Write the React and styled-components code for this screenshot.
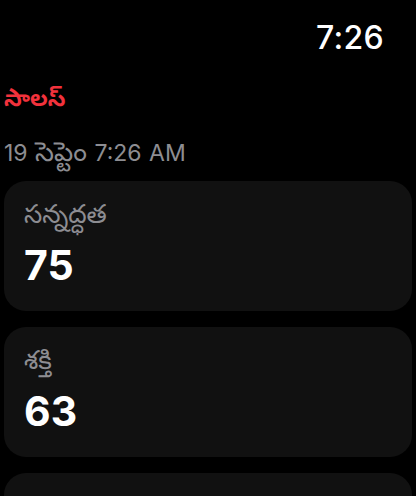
import styled, { createGlobalStyle } from 'styled-components';

const GlobalStyle = createGlobalStyle`
    html, body {
        margin: 0;
        padding: 0;
        background: #000;
    }
    body {
        font-family: "Noto Sans Telugu", "Noto Sans", Inter, "Liberation Sans", sans-serif;
        -webkit-font-smoothing: antialiased;
    }
`

const metrics = [
    { label: 'సన్నద్ధత', value: 75 },
    { label: 'శక్తి', value: 63 },
    { label: 'హృదయ స్పందన', value: 58 },
];

export default function App () {
    return (
        <Screen>
            <GlobalStyle />
            <StatusBar>
                <Clock>7:26</Clock>
            </StatusBar>
            <Title>సాలస్</Title>
            <Timestamp>
                19 <Telugu>సెప్టెం</Telugu> 7:26 AM
            </Timestamp>
            <CardList>
                { metrics.map((m) => (
                    <Card key={m.label}>
                        <Label>{m.label}</Label>
                        <Value>{m.value}</Value>
                    </Card>
                ))}
            </CardList>
        </Screen>
    )
}

const Screen = styled.div`
    width: 416px;
    height: 496px;
    overflow: hidden;
    background: #000;
    display: flex;
    flex-direction: column;
    padding: 0 4px;
    box-sizing: border-box;
`

const StatusBar = styled.div`
    display: flex;
    justify-content: flex-end;
    align-items: center;
    padding-right: 28px;
    padding-top: 22px;
    height: 81px;
    box-sizing: border-box;
    flex-shrink: 0;
`

const Clock = styled.div`
    color: #fff;
    font-family: Inter, "Liberation Sans", sans-serif;
    font-size: 32px;
    font-weight: 500;
    line-height: 40px;
    letter-spacing: 0.3px;
    margin-top: -27px;
`

const Title = styled.div`
    height: 41px;
    line-height: 41px;
    color: #f2323c;
    font-size: 23px;
    font-weight: 700;
    flex-shrink: 0;
`

const Timestamp = styled.div`
    height: 59px;
    line-height: 63px;
    color: #8d8d92;
    font-family: Inter, "Liberation Sans", sans-serif;
    font-size: 23px;
    word-spacing: 1px;
    flex-shrink: 0;
    white-space: nowrap;
`

const Telugu = styled.span`
    font-family: "Noto Sans Telugu", "Noto Sans", sans-serif;
    font-size: 27px;
`

const CardList = styled.div`
    display: flex;
    flex-direction: column;
    gap: 16px;
`

const Card = styled.div`
    height: 130px;
    box-sizing: border-box;
    border-radius: 22px;
    background: #111111;
    padding: 21px 20px 0;
    display: flex;
    flex-direction: column;
    flex-shrink: 0;
`

const Label = styled.div`
    height: 32px;
    line-height: 32px;
    color: #8d8d92;
    font-size: 26px;
    white-space: nowrap;
`

const Value = styled.div`
    margin-top: 8px;
    height: 46px;
    line-height: 46px;
    color: #fff;
    font-family: Inter, "Liberation Sans", sans-serif;
    font-size: 41px;
    font-weight: 700;
`
